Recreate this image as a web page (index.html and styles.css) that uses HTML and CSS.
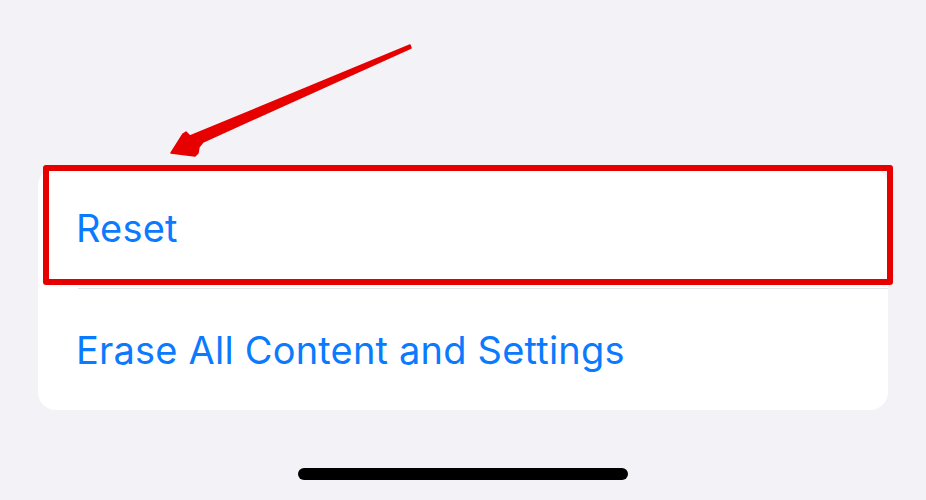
FILE: index.html
```html
<!DOCTYPE html>
<html>
<head>
<meta charset="utf-8">
<link rel="stylesheet" href="styles.css">
</head>
<body>
<div class="screen">
  <div class="card">
    <div class="row">Reset</div>
    <div class="divider"></div>
    <div class="row">Erase All Content and Settings</div>
    <div class="highlight"></div>
  </div>
  <div class="home"></div>
  <svg class="arrow" width="926" height="200" viewBox="0 0 926 200">
    <polygon fill="#e60000" stroke="#e60000" stroke-width="1.5" stroke-linejoin="round" points="410,45 411,48 203,142 199,147 198,153 195,156 171,153 183,134 186,132 190,136"/>
  </svg>
</div>
</body>
</html>
```
FILE: styles.css
```css
html, body {
  margin: 0;
  padding: 0;
  background: #f2f2f7;
}
.screen {
  position: relative;
  width: 926px;
  height: 500px;
  overflow: hidden;
  background: #f2f2f7;
  padding-top: 168px;
  box-sizing: border-box;
  display: flex;
  flex-direction: column;
  align-items: center;
}
.card {
  position: relative;
  width: 850px;
  align-self: flex-start;
  margin-left: 38px;
  background: #ffffff;
  border-radius: 18px;
}
.row {
  height: 120px;
  display: flex;
  align-items: center;
  padding-left: 38px;
  font-family: Inter, "Noto Sans", sans-serif;
  font-size: 38px;
  color: #0a7aff;
  letter-spacing: 0.2px;
}
.divider {
  height: 1px;
  margin-left: 40px;
  background: #e3e3e8;
}
.row + .divider + .row {
  height: 121px;
}
.highlight {
  position: absolute;
  left: 5px;
  top: -3px;
  width: 850px;
  height: 120px;
  border: 6px solid #e60000;
  border-radius: 3px;
  box-sizing: border-box;
}
.home {
  margin-top: 58px;
  width: 330px;
  height: 12px;
  border-radius: 6px;
  background: #000;
}
.arrow {
  position: absolute;
  left: 0;
  top: 0;
}
```
